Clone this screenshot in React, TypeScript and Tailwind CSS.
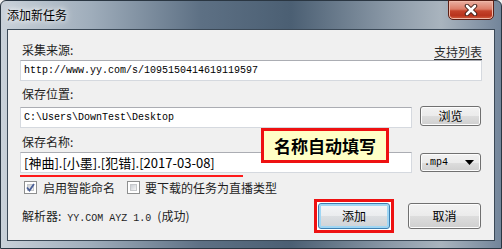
import React from "react";

const cjk = "font-['Noto_Sans_CJK_SC','Noto_Sans',sans-serif]";
const mono = "font-['Liberation_Mono','Noto_Sans_CJK_SC',monospace]";
const btnSkin =
    "rounded-[3px] border border-[#707070] bg-[linear-gradient(to_bottom,#f2f2f2_0%,#ebebeb_50%,#dddddd_51%,#cfcfcf_100%)] shadow-[inset_0_0_0_1px_#fcfcfc] text-[12px] text-black";
const btn = `flex items-center justify-center ${btnSkin}`;
const field = "bg-white border border-[#d5d9df] border-t-[#abadb3] h-[21px] flex items-center px-[3px]";

export default function App() {
    return (
        <div className={`w-[502px] h-[249px] overflow-hidden ${cjk} bg-[#f0f0f0]`}>
            <div className="w-[502px] h-[249px] flex flex-col rounded-t-[6px] border border-[#2a3642] bg-[linear-gradient(to_right,#c9d1d9_0%,#9fadbb_18%,#5d7084_40%,#4b5f73_58%,#8c9aa8_78%,#a9b4be_88%,#73859a_100%)]">
                {/* Title bar */}
                <div className="h-[28px] flex items-start">
                    <span className="pl-[6px] pt-[8px] text-[12px] leading-[12px] text-black [text-shadow:0_0_5px_#ffffff,0_0_8px_#ffffff]">
                        添加新任务
                    </span>
                    <CloseButton />
                </div>

                {/* Client area */}
                <div className="relative flex-1 mx-[6px] mb-[7px] border border-[#3b4957] bg-[#f0f0f0] flex flex-col text-[12px] leading-[12px] text-[#1e1e1e]">
                    <div className="flex items-end pt-[14px] pl-[14px] pr-[12px]">
                        <span>采集来源:</span>
                        <span className="ml-auto underline underline-offset-[2px] text-[#2b2b2b] translate-y-[2px]">支持列表</span>
                    </div>
                    <div className={`mt-[4px] mx-[12px] ${field}`}>
                        <span className={`${mono} text-[10px] text-black`}>http://www.yy.com/s/1095150414619119597</span>
                    </div>

                    <div className="mt-[7px] pl-[14px]">保存位置:</div>
                    <div className="mt-[6px] flex items-start pl-[12px] pr-[13px]">
                        <div className={`mt-[1px] w-[392px] ${field}`}>
                            <span className={`${mono} text-[10px] text-black`}>C:\Users\DownTest\Desktop</span>
                        </div>
                        <button className={`ml-auto w-[61px] h-[20px] ${btn}`}>浏览</button>
                    </div>

                    <div className="mt-[8px] pl-[14px]">保存名称:</div>
                    <div className="mt-[4px] flex items-start pl-[12px] pr-[13px]">
                        <div className={`w-[392px] ${field}`}>
                            <span className="text-[13px] leading-[13px] text-black">[神曲].[小墨].[犯错].[2017-03-08]</span>
                        </div>
                        <div className={`ml-auto mt-[1px] w-[61px] h-[19px] flex items-center justify-between pl-[3px] pr-[6px] ${btnSkin}`}>
                            <span className={`${mono} text-[10px]`}>.mp4</span>
                            <svg width="9" height="5" viewBox="0 0 9 5">
                                <path d="M0 0h9L4.5 5z" fill="#000" />
                            </svg>
                        </div>
                    </div>

                    <div className="mt-[8px] flex items-center pl-[16px]">
                        <Checkbox checked />
                        <span className="ml-[6px]">启用智能命名</span>
                        <span className="ml-[12px]"><Checkbox /></span>
                        <span className="ml-[5px]">要下载的任务为直播类型</span>
                    </div>

                    <div className="mt-[5px] flex items-center pl-[14px] pr-[13px]">
                        <span className="mt-[2px]">
                            解析器:<span className={`${mono} text-[10px]`}> YY.COM AYZ 1.0 </span>(成功)
                        </span>
                        <div className="ml-auto border-[3px] border-[#ee1111] p-[1px] bg-white">
                            <button className="w-[72px] h-[26px] flex items-center justify-center rounded-[3px] border border-[#3c7fb1] bg-[linear-gradient(to_bottom,#f4f6f8_0%,#eaecee_50%,#dcdfe2_51%,#ced2d6_100%)] shadow-[inset_0_0_0_2px_#9fd6f4] text-[12px] text-black">
                                添加
                            </button>
                        </div>
                        <button className={`ml-[14px] w-[73px] h-[26px] ${btn}`}>取消</button>
                    </div>

                    {/* annotation overlays */}
                    <div className="absolute left-[12px] top-[145px] w-[223px] h-[2px] bg-[#ff1a1a]" />
                    <div className="absolute left-[253px] top-[98px] w-[128px] h-[35px] border-[3px] border-[#ee1111] bg-[#ffffc6] flex items-center justify-center">
                        <span className="text-[17px] leading-[17px] font-bold text-black">名称自动填写</span>
                    </div>
                </div>
            </div>
        </div>
    );
}

function CloseButton() {
    return (
        <div className="ml-auto mr-[7px] w-[46px] h-[20px] -mt-px rounded-b-[5px] border border-[#5b1f15] bg-[linear-gradient(to_bottom,#eab0a2_0%,#dc7d68_45%,#c4432b_55%,#b8331d_80%,#d06040_100%)] shadow-[inset_0_0_0_1px_#f0b8a8] flex items-center justify-center">
            <svg width="14" height="12" viewBox="0 0 14 12">
                <path d="M3 2l8 8M11 2l-8 8" stroke="#3a1a14" strokeWidth="4.5" strokeLinecap="round" />
                <path d="M3 2l8 8M11 2l-8 8" stroke="#ffffff" strokeWidth="2.6" strokeLinecap="round" />
            </svg>
        </div>
    );
}

function Checkbox({ checked = false }: { checked?: boolean }) {
    return (
        <div className="w-[13px] h-[13px] border border-[#8e8f8f] bg-white p-[2px]">
            <div className="w-full h-full border border-[#c6c8cb] bg-[linear-gradient(135deg,#cbcfd5_0%,#f6f6f6_100%)] flex items-center justify-center">
                {checked && (
                    <svg width="9" height="9" viewBox="0 0 9 9" className="-m-[2px]">
                        <path d="M1 4.5l2.5 3L8 1" stroke="#4a5f97" strokeWidth="1.8" fill="none" />
                    </svg>
                )}
            </div>
        </div>
    );
}
